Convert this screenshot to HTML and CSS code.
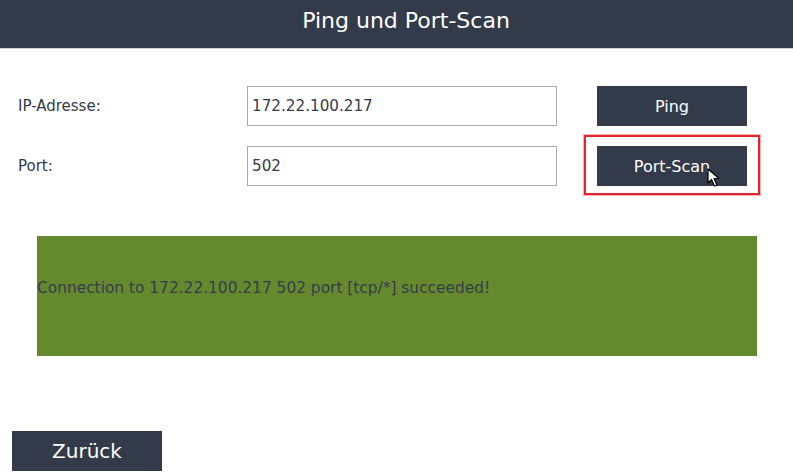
FILE: index.html
```html
<!DOCTYPE html>
<html lang="de">
<head>
<meta charset="utf-8">
<title>Ping und Port-Scan</title>
<link rel="stylesheet" href="styles.css">
</head>
<body>
<header class="topbar">Ping und Port-Scan</header>
<main class="content">
  <div class="form">
    <label class="label" for="ip">IP-Adresse:</label>
    <input class="field" id="ip" type="text" value="172.22.100.217">
    <button class="btn" type="button">Ping</button>

    <label class="label" for="port">Port:</label>
    <input class="field" id="port" type="text" value="502">
    <div class="btn-wrap">
      <button class="btn" type="button">Port-Scan</button>
      <span class="highlight"></span>
      <svg class="cursor" width="14" height="20" viewBox="0 0 14 20" aria-hidden="true">
        <path d="M1 1 L1 15 L4.5 11.5 L7.5 18 L10 17 L7 10.5 L12 10.5 Z" fill="#fff" stroke="#000" stroke-width="1.2" stroke-linejoin="round"/>
      </svg>
    </div>
  </div>
  <div class="result">Connection to 172.22.100.217 502 port [tcp/*] succeeded!</div>
  <button class="btn btn-back" type="button">Zurück</button>
</main>
</body>
</html>
```
FILE: styles.css
```css
html, body {
  margin: 0;
  padding: 0;
  background: #ffffff;
}
body {
  width: 793px;
  height: 474px;
  overflow: hidden;
  font-family: "DejaVu Sans", "Liberation Sans", sans-serif;
  color: #343a4a;
}
.topbar {
  box-sizing: border-box;
  height: 49px;
  padding-left: 19px;
  background: #333a4a;
  color: #ffffff;
  font-size: 22px;
  line-height: 42px;
  text-align: center;
  border-bottom: 1px solid #c9ced8;
}
.content {
  display: flex;
  flex-direction: column;
}
.form {
  display: grid;
  grid-template-columns: 189px 310px 150px;
  grid-auto-rows: 40px;
  column-gap: 40px;
  row-gap: 20px;
  align-items: center;
  padding: 37px 0 0 18px;
}
.label {
  font-size: 15px;
  color: #343a4a;
}
.field {
  box-sizing: border-box;
  height: 40px;
  width: 310px;
  margin: 0;
  border: 1px solid #a9abad;
  border-radius: 0;
  padding: 0 4px;
  font-family: "DejaVu Sans", sans-serif;
  font-size: 15.2px;
  color: #343a4a;
  background: #fff;
  outline: none;
}
.btn {
  box-sizing: border-box;
  width: 150px;
  height: 40px;
  margin: 0;
  border: none;
  border-radius: 0;
  background: #333a4a;
  color: #ffffff;
  font-family: "DejaVu Sans", sans-serif;
  font-size: 16px;
  padding: 0;
  cursor: pointer;
}
.btn-wrap {
  position: relative;
  width: 150px;
  height: 40px;
}
.highlight {
  position: absolute;
  top: -11px;
  left: -13px;
  right: -13px;
  bottom: -9px;
  border: 2px solid #e3262c;
  box-shadow: 0 0 0 1px rgba(227, 38, 44, 0.35);
  pointer-events: none;
}
.cursor {
  position: absolute;
  left: 110px;
  top: 22px;
}
.result {
  margin: 50px 0 0 37px;
  width: 720px;
  height: 120px;
  box-sizing: border-box;
  background: #658a2e;
  padding-top: 42px;
  font-size: 15.4px;
  line-height: 20px;
  color: #363c4c;
}
.btn-back {
  margin: 75px 0 0 12px;
  font-size: 20px;
}
```
